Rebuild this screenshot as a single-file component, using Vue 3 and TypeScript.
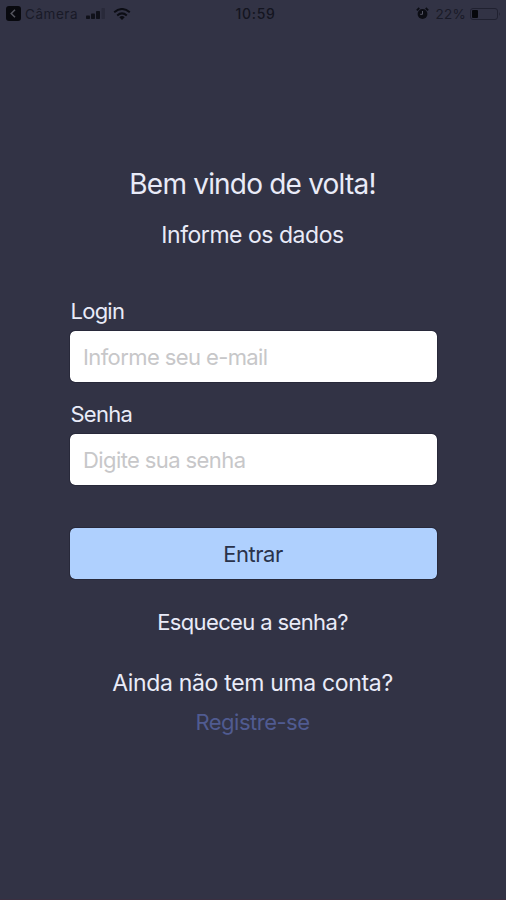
<script setup lang="ts">
import { ref } from 'vue'

const login = ref('')
const password = ref('')
</script>

<template>
  <div class="screen">
    <header class="status-bar">
      <div class="status-left">
        <svg class="back" viewBox="0 0 15 15" aria-hidden="true">
          <rect width="15" height="15" rx="3" fill="#08090e" />
          <path d="M9 3.7 5.2 7.5 9 11.3" fill="none" stroke="#55565f" stroke-width="1.5" />
        </svg>
        <span class="app-name">Câmera</span>
        <svg class="signal" viewBox="0 0 20 12" aria-hidden="true">
          <rect x="0" y="7.5" width="4" height="3.5" rx=".8" />
          <rect x="5" y="5.5" width="4" height="5.5" rx=".8" />
          <rect x="10" y="3" width="4" height="8" rx=".8" />
          <rect x="15.5" y="0" width="3.5" height="11" rx=".8" opacity=".25" />
        </svg>
        <svg class="wifi" viewBox="0 0 18 12" aria-hidden="true">
          <g fill="none" stroke="#0c0d14" stroke-width="2">
            <path d="M1.2 4.3Q9-2.3 16.8 4.3" />
            <path d="M4.2 7.4Q9 3.3 13.8 7.4" />
          </g>
          <path d="M6.3 9.2Q9 7 11.7 9.2L9 12Z" fill="#0c0d14" />
        </svg>
      </div>
      <time class="clock">10:59</time>
      <div class="status-right">
        <svg class="alarm" viewBox="0 0 13 13" aria-hidden="true">
          <circle cx="6.5" cy="7" r="4.9" />
          <path d="M.8 3.3 3.3 1M12.2 3.3 9.7 1" stroke="#0c0d14" stroke-width="1.8" />
          <path d="M6.5 4V7.3H4.2" fill="none" stroke="#555664" stroke-width="1" />
        </svg>
        <span class="percent">22%</span>
        <svg class="battery" viewBox="0 0 31 12" aria-hidden="true">
          <rect x=".5" y=".5" width="27" height="11" rx="2.5" fill="none" stroke="#202130" />
          <rect x="2" y="2" width="6" height="8" rx="1" fill="#06070b" />
          <path d="M29 4Q30.7 6 29 8Z" fill="#202130" />
        </svg>
      </div>
    </header>

    <main class="content">
      <h1 class="title">Bem vindo de volta!</h1>
      <p class="subtitle">Informe os dados</p>
      <form class="form" @submit.prevent>
        <label class="label" for="login">Login</label>
        <input id="login" v-model="login" class="field email" type="email" placeholder="Informe seu e-mail" />
        <label class="label" for="password">Senha</label>
        <input id="password" v-model="password" class="field" type="password" placeholder="Digite sua senha" />
        <button class="submit" type="submit">Entrar</button>
      </form>
      <a class="forgot">Esqueceu a senha?</a>
      <p class="question">Ainda não tem uma conta?</p>
      <a class="register">Registre-se</a>
    </main>
  </div>
</template>

<style>
body {
  margin: 0;
  background: #323345;
}
</style>

<style scoped>
.screen {
  box-sizing: border-box;
  height: 900px;
  background: #323345;
  border-bottom: 1px solid #3b2f40;
  color: #e9ebf8;
  font-family: Inter, "Liberation Sans", sans-serif;
}
.status-bar {
  display: grid;
  grid-template-columns: 1fr auto 1fr;
  align-items: center;
  height: 27px;
  padding: 0 5px 0 6px;
  color: #141520;
  font-size: 13.5px;
  line-height: 16px;
}
.status-left,
.status-right {
  display: flex;
  align-items: center;
}
.status-right {
  justify-content: flex-end;
}
.back {
  width: 15px;
  height: 15px;
}
.app-name {
  margin-left: 4px;
  letter-spacing: 0.55px;
  color: #191a27;
}
.signal {
  width: 20px;
  height: 12px;
  margin-left: 8px;
  fill: #10111a;
}
.wifi {
  width: 18px;
  height: 12px;
  margin-left: 7px;
}
.clock {
  margin-left: 4px;
  font-size: 14px;
  font-weight: 500;
  letter-spacing: 0.7px;
}
.alarm {
  width: 13px;
  height: 13px;
  fill: #0c0d14;
}
.percent {
  margin-left: 6px;
  letter-spacing: 0.3px;
  color: #191a27;
}
.battery {
  width: 31px;
  height: 12px;
  margin-left: 4px;
}
.content {
  display: flex;
  flex-direction: column;
  align-items: center;
  padding: 139px 69px 0 70px;
}
.title,
.subtitle,
.forgot,
.question,
.register {
  padding-right: 2px;
}
.title {
  margin: 0;
  font-size: 28px;
  font-weight: 400;
  line-height: 36px;
  letter-spacing: -0.8px;
}
.subtitle {
  margin: 18px 0 0;
  font-size: 23px;
  line-height: 30px;
  letter-spacing: -0.47px;
}
.form {
  display: flex;
  flex-direction: column;
  width: 100%;
  margin-top: 47px;
}
.label {
  padding-left: 0.5px;
  font-size: 22px;
  line-height: 28px;
  letter-spacing: -0.75px;
}
.field {
  box-sizing: border-box;
  width: 100%;
  height: 51px;
  margin: 6px 0 0;
  padding: 0 13px;
  border: 0;
  border-radius: 5px;
  outline: 1px solid #28293a;
  background: #fff;
  color: #323345;
  font: 22px Inter, "Liberation Sans", sans-serif;
  letter-spacing: -0.6px;
}
.email {
  margin-bottom: 18px;
}
.field::placeholder {
  color: #c7c7c9;
  opacity: 1;
}
.submit {
  height: 51px;
  margin-top: 43px;
  padding: 0 1px 0 0;
  border: 0;
  border-radius: 5px;
  outline: 1px solid #28293a;
  background: #afd0fe;
  color: #29324a;
  font: 22px Inter, "Liberation Sans", sans-serif;
  letter-spacing: -0.5px;
}
.forgot {
  margin-top: 29px;
  font-size: 22px;
  line-height: 28px;
  letter-spacing: -0.63px;
}
.question {
  margin: 32px 0 0;
  font-size: 23px;
  line-height: 30px;
  letter-spacing: -0.33px;
}
.register {
  margin-top: 10px;
  color: #505b91;
  font-size: 22px;
  line-height: 28px;
  letter-spacing: -0.5px;
}
</style>
